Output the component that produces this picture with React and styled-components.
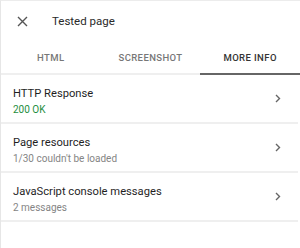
import React from "react";
import styled, { createGlobalStyle } from "styled-components";

const Global = createGlobalStyle`
  html, body { margin: 0; padding: 0; background: #fff; }
  body { font-family: Roboto, "Noto Sans", Arial, sans-serif; }
`;

const Panel = styled.div`
  width: 300px;
  height: 248px;
  box-sizing: border-box;
  border-left: 1px solid #e6e6e6;
  border-top: 1px solid #ececec;
  background: #fff;
  display: flex;
  flex-direction: column;
`;

const Header = styled.div`
  height: 40px;
  display: flex;
  align-items: center;
  padding-left: 16px;
  gap: 24px;
`;

const Title = styled.div`
  font-size: 11.5px;
  color: #2a2a2a;
`;

const CloseIcon = styled.svg`
  width: 11px;
  height: 11px;
  display: block;
`;

const Tabs = styled.div`
  display: grid;
  grid-template-columns: repeat(3, 1fr);
  height: 32px;
  border-bottom: 2px solid #efefef;
`;

const Tab = styled.div`
  display: flex;
  align-items: center;
  justify-content: center;
  font-size: 9.5px;
  font-weight: 500;
  letter-spacing: 0.4px;
  color: ${p => (p.$active ? "#333" : "#777")};
  position: relative;
  &::after {
    content: "";
    display: ${p => (p.$active ? "block" : "none")};
    position: absolute;
    left: 0;
    right: 0;
    bottom: -2px;
    height: 2px;
    background: #666;
  }
`;

const List = styled.div`
  display: flex;
  flex-direction: column;
`;

const Row = styled.div`
  height: 47px;
  box-sizing: content-box;
  display: flex;
  justify-content: space-between;
  padding: 0 17px 0 12px;
  border-bottom: 2px solid #efefef;
  margin-right: 2px;
`;

const RowText = styled.div`
  display: flex;
  flex-direction: column;
  gap: 2px;
  padding-top: 12px;
`;

const RowTitle = styled.div`
  font-size: 11.2px;
  line-height: 14px;
  color: #1f1f1f;
`;

const RowSub = styled.div`
  font-size: 10px;
  line-height: 14px;
  color: ${p => p.$color || "#858585"};
`;

const Chevron = styled.svg`
  width: 6px;
  height: 9px;
  display: block;
  align-self: center;
`;

const items = [
  { title: "HTTP Response", sub: "200 OK", color: "#1e8e3e" },
  { title: "Page resources", sub: "1/30 couldn't be loaded" },
  { title: "JavaScript console messages", sub: "2 messages" },
];

export default function App() {
  return (
    <>
      <Global />
      <Panel>
        <Header>
          <CloseIcon viewBox="0 0 11 11">
            <path d="M1 1L10 10M10 1L1 10" stroke="#555" strokeWidth="1.4" />
          </CloseIcon>
          <Title>Tested page</Title>
        </Header>
        <Tabs>
          <Tab>HTML</Tab>
          <Tab>SCREENSHOT</Tab>
          <Tab $active>MORE INFO</Tab>
        </Tabs>
        <List>
          {items.map(it => (
            <Row key={it.title}>
              <RowText>
                <RowTitle>{it.title}</RowTitle>
                <RowSub $color={it.color}>{it.sub}</RowSub>
              </RowText>
              <Chevron viewBox="0 0 6 9">
                <path d="M1 1L4.5 4.5L1 8" stroke="#666" strokeWidth="1.4" fill="none" />
              </Chevron>
            </Row>
          ))}
        </List>
      </Panel>
    </>
  );
}
